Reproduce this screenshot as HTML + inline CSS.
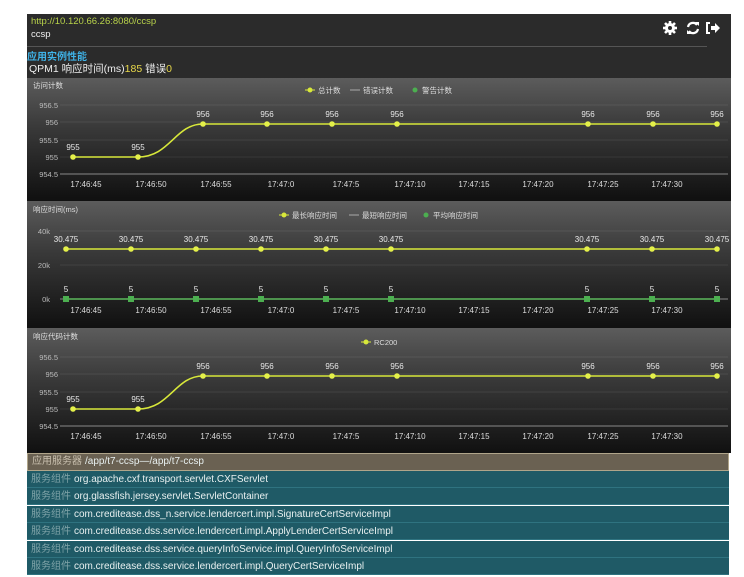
<!DOCTYPE html>
<html><head><meta charset="utf-8"><style>
body{margin:0;width:744px;height:577px;background:#fff;position:relative;overflow:hidden;font-family:"Liberation Sans","Noto Sans CJK SC",sans-serif}
.p{position:absolute;left:27px;width:704px}
.hdr{top:14px;height:64px;background:#2b2b2b}
.c{background:linear-gradient(#5c5c5c,#3a3a3a 40%,#111 100%)}
.row{position:absolute;left:27px;width:702px;height:17px;background:#1f5a66;border-bottom:1px solid #2f7380;color:#e8f0f0;font-size:10px;line-height:17px;padding-left:4px;box-sizing:border-box}
.row span{color:#7fa3a8;margin-right:3px}
</style></head><body>
<div class="p" style="top:14px;height:439px;background:#111"></div>
<div class="p hdr"></div>
<div style="position:absolute;left:31px;top:16px;font-size:9.5px;color:#b8d24a">http://10.120.66.26:8080/ccsp</div>
<div style="position:absolute;left:31px;top:29px;font-size:9.5px;color:#eee">ccsp</div>
<div style="position:absolute;left:27px;top:46px;width:680px;height:1px;background:#555"></div>
<div style="position:absolute;left:27px;top:48px;font-size:10px;color:#3fb3e8;font-weight:bold">应用实例性能</div>
<div style="position:absolute;left:29px;top:61px;font-size:10.5px;color:#eee">QPM1 响应时间(ms)<span style="color:#e8d84a">185</span> 错误<span style="color:#e8d84a">0</span></div>
<svg style="position:absolute;left:660px;top:20px" width="68" height="16" viewBox="0 0 68 16">
<g fill="#fff"><circle cx="10" cy="8" r="5"/><g stroke="#fff" stroke-width="2.6"><line x1="10" y1="1" x2="10" y2="15"/><line x1="3" y1="8" x2="17" y2="8"/><line x1="5" y1="3" x2="15" y2="13"/><line x1="15" y1="3" x2="5" y2="13"/></g><circle cx="10" cy="8" r="2" fill="#2b2b2b"/></g>
<path d="M28 7a5 5 0 0 1 9-2M38 9a5 5 0 0 1-9 2" stroke="#fff" stroke-width="2.2" fill="none"/><path d="M35 2l4 0 0 4zM31 14l-4 0 0-4z" fill="#fff"/>
<path d="M50 3h-3v10h3" stroke="#fff" stroke-width="2" fill="none"/><path d="M51 6h4v-3l5 5-5 5v-3h-4z" fill="#fff"/>
</svg>
<div class="p c" style="top:78px;height:120px"></div>
<div class="p c" style="top:201px;height:125px"></div>
<div class="p c" style="top:328px;height:124px"></div>
<svg style="position:absolute;left:0;top:0" width="744" height="577" font-family="Liberation Sans, Noto Sans CJK SC, sans-serif" font-size="8">
<g fill="#ddd" font-size="7.5">
<text x="33" y="88">访问计数</text><text x="33" y="212">响应时间(ms)</text><text x="33" y="339">响应代码计数</text>
</g>
<g font-size="7.5" fill="#ddd">
<circle cx="310" cy="90" r="2.5" fill="#d8e83a"/><line x1="305" y1="90" x2="315" y2="90" stroke="#d8e83a"/><text x="318" y="93">总计数</text>
<line x1="350" y1="90" x2="360" y2="90" stroke="#aaa"/><text x="363" y="93">错误计数</text>
<circle cx="415" cy="90" r="2.5" fill="#4caf50"/><text x="422" y="93">警告计数</text>
<circle cx="284" cy="215" r="2.5" fill="#d8e83a"/><line x1="279" y1="215" x2="289" y2="215" stroke="#d8e83a"/><text x="292" y="218">最长响应时间</text>
<line x1="349" y1="215" x2="359" y2="215" stroke="#aaa"/><text x="362" y="218">最短响应时间</text>
<circle cx="426" cy="215" r="2.5" fill="#4caf50"/><text x="433" y="218">平均响应时间</text>
<circle cx="366" cy="342" r="2.5" fill="#d8e83a"/><line x1="361" y1="342" x2="371" y2="342" stroke="#d8e83a"/><text x="374" y="345">RC200</text>
</g>
<g stroke="#ffffff" stroke-opacity="0.08">
<line x1="60" x2="728" y1="105" y2="105"/><line x1="60" x2="728" y1="122" y2="122"/><line x1="60" x2="728" y1="140" y2="140"/><line x1="60" x2="728" y1="157" y2="157"/>
<line x1="60" x2="728" y1="231" y2="231"/><line x1="60" x2="728" y1="265" y2="265"/>
<line x1="60" x2="728" y1="357" y2="357"/><line x1="60" x2="728" y1="374" y2="374"/><line x1="60" x2="728" y1="392" y2="392"/><line x1="60" x2="728" y1="409" y2="409"/>
</g>
<g stroke="#888"><line x1="60" x2="728" y1="174" y2="174"/><line x1="60" x2="728" y1="299" y2="299"/><line x1="60" x2="728" y1="426" y2="426"/></g>
<g fill="#bbb" font-size="7.5" text-anchor="end">
<text x="58" y="108">956.5</text><text x="58" y="125">956</text><text x="58" y="143">955.5</text><text x="58" y="160">955</text><text x="58" y="177">954.5</text>
<text x="50" y="234">40k</text><text x="50" y="268">20k</text><text x="50" y="302">0k</text>
<text x="58" y="360">956.5</text><text x="58" y="377">956</text><text x="58" y="395">955.5</text><text x="58" y="412">955</text><text x="58" y="429">954.5</text>
</g>
<g fill="#ddd" font-size="8" text-anchor="middle">
<text x="86" y="187">17:46:45</text><text x="151" y="187">17:46:50</text><text x="216" y="187">17:46:55</text><text x="281" y="187">17:47:0</text><text x="346" y="187">17:47:5</text><text x="410" y="187">17:47:10</text><text x="474" y="187">17:47:15</text><text x="538" y="187">17:47:20</text><text x="603" y="187">17:47:25</text><text x="667" y="187">17:47:30</text>
<text x="86" y="313">17:46:45</text><text x="151" y="313">17:46:50</text><text x="216" y="313">17:46:55</text><text x="281" y="313">17:47:0</text><text x="346" y="313">17:47:5</text><text x="410" y="313">17:47:10</text><text x="474" y="313">17:47:15</text><text x="538" y="313">17:47:20</text><text x="603" y="313">17:47:25</text><text x="667" y="313">17:47:30</text>
<text x="86" y="439">17:46:45</text><text x="151" y="439">17:46:50</text><text x="216" y="439">17:46:55</text><text x="281" y="439">17:47:0</text><text x="346" y="439">17:47:5</text><text x="410" y="439">17:47:10</text><text x="474" y="439">17:47:15</text><text x="538" y="439">17:47:20</text><text x="603" y="439">17:47:25</text><text x="667" y="439">17:47:30</text>
</g>
<path d="M73 157H138C170 157 175 124 203 124H717" stroke="#d8e83a" stroke-width="1.6" fill="none"/>
<path d="M73 409H138C170 409 175 376 203 376H717" stroke="#d8e83a" stroke-width="1.6" fill="none"/>
<path d="M64 249H717" stroke="#d8e83a" stroke-width="1.6"/>
<path d="M64 299H717" stroke="#5cb85c" stroke-width="1.6"/>
<g fill="#e4f04a">
<circle cx="73" cy="157" r="2.8"/><circle cx="138" cy="157" r="2.8"/><circle cx="203" cy="124" r="2.8"/><circle cx="267" cy="124" r="2.8"/><circle cx="332" cy="124" r="2.8"/><circle cx="397" cy="124" r="2.8"/><circle cx="588" cy="124" r="2.8"/><circle cx="653" cy="124" r="2.8"/><circle cx="717" cy="124" r="2.8"/>
<circle cx="73" cy="409" r="2.8"/><circle cx="138" cy="409" r="2.8"/><circle cx="203" cy="376" r="2.8"/><circle cx="267" cy="376" r="2.8"/><circle cx="332" cy="376" r="2.8"/><circle cx="397" cy="376" r="2.8"/><circle cx="588" cy="376" r="2.8"/><circle cx="653" cy="376" r="2.8"/><circle cx="717" cy="376" r="2.8"/>
<circle cx="66" cy="249" r="2.8"/><circle cx="131" cy="249" r="2.8"/><circle cx="196" cy="249" r="2.8"/><circle cx="261" cy="249" r="2.8"/><circle cx="326" cy="249" r="2.8"/><circle cx="391" cy="249" r="2.8"/><circle cx="587" cy="249" r="2.8"/><circle cx="652" cy="249" r="2.8"/><circle cx="717" cy="249" r="2.8"/>
</g>
<g fill="#4caf50">
<rect x="63" y="296" width="6" height="6"/><rect x="128" y="296" width="6" height="6"/><rect x="193" y="296" width="6" height="6"/><rect x="258" y="296" width="6" height="6"/><rect x="323" y="296" width="6" height="6"/><rect x="388" y="296" width="6" height="6"/><rect x="584" y="296" width="6" height="6"/><rect x="649" y="296" width="6" height="6"/><rect x="714" y="296" width="6" height="6"/>
</g>
<g fill="#e8e8e8" font-size="8" text-anchor="middle">
<text x="73" y="150">955</text><text x="138" y="150">955</text><text x="203" y="117">956</text><text x="267" y="117">956</text><text x="332" y="117">956</text><text x="397" y="117">956</text><text x="588" y="117">956</text><text x="653" y="117">956</text><text x="717" y="117">956</text>
<text x="73" y="402">955</text><text x="138" y="402">955</text><text x="203" y="369">956</text><text x="267" y="369">956</text><text x="332" y="369">956</text><text x="397" y="369">956</text><text x="588" y="369">956</text><text x="653" y="369">956</text><text x="717" y="369">956</text>
<text x="66" y="242">30.475</text><text x="131" y="242">30.475</text><text x="196" y="242">30.475</text><text x="261" y="242">30.475</text><text x="326" y="242">30.475</text><text x="391" y="242">30.475</text><text x="587" y="242">30.475</text><text x="652" y="242">30.475</text><text x="717" y="242">30.475</text>
<text x="66" y="292">5</text><text x="131" y="292">5</text><text x="196" y="292">5</text><text x="261" y="292">5</text><text x="326" y="292">5</text><text x="391" y="292">5</text><text x="587" y="292">5</text><text x="652" y="292">5</text><text x="717" y="292">5</text>
</g>
</svg>
<div class="row" style="top:453px;height:18px;background:#6a6152;border:1px solid #b0a58a;line-height:16px"><span style="color:#c8bfae">应用服务器</span>/app/t7-ccsp—/app/t7-ccsp</div>
<div class="row" style="top:471px"><span>服务组件</span>org.apache.cxf.transport.servlet.CXFServlet</div>
<div class="row" style="top:488px"><span>服务组件</span>org.glassfish.jersey.servlet.ServletContainer</div>
<div class="row" style="top:506px"><span>服务组件</span>com.creditease.dss_n.service.lendercert.impl.SignatureCertServiceImpl</div>
<div class="row" style="top:523px"><span>服务组件</span>com.creditease.dss.service.lendercert.impl.ApplyLenderCertServiceImpl</div>
<div class="row" style="top:541px"><span>服务组件</span>com.creditease.dss.service.queryInfoService.impl.QueryInfoServiceImpl</div>
<div class="row" style="top:558px"><span>服务组件</span>com.creditease.dss.service.lendercert.impl.QueryCertServiceImpl</div>
</body></html>
